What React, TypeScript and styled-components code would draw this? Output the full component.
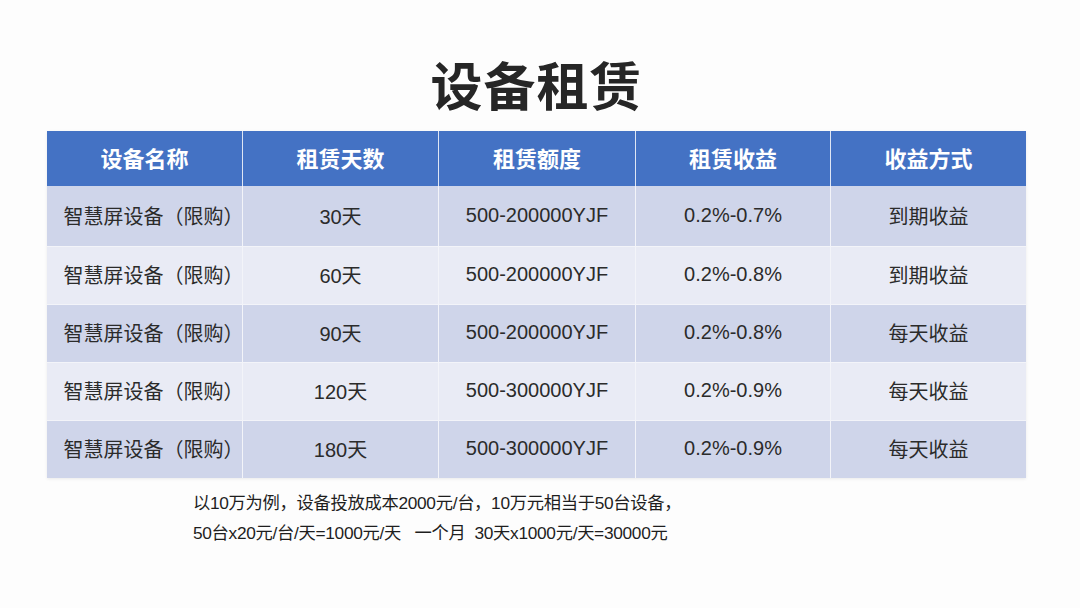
import React from "react";
import styled, { createGlobalStyle } from "styled-components";

const Global = createGlobalStyle`
  html, body { margin: 0; padding: 0; background: #ffffff; }
  body { font-family: "Liberation Sans", "Noto Sans CJK SC", sans-serif; }
`;

const Page = styled.div`
  width: 1080px;
  height: 608px;
  background: #fdfdfd;
  display: flex;
  flex-direction: column;
  padding: 0 0 0 47px;
  box-sizing: border-box;
  overflow: hidden;
`;

const Title = styled.h1`
  margin: 52px 0 0 0;
  width: 979px;
  height: 79px;
  text-align: center;
  font-family: "Noto Sans CJK SC", sans-serif;
  font-weight: 700;
  font-size: 52px;
  line-height: 64px;
  color: #262626;
  letter-spacing: 1px;
`;

const Table = styled.div`
  width: 979px;
  display: grid;
  grid-template-columns: 195px 196px 197px 195px 196px;
  box-shadow: 0 1px 3px rgba(0, 0, 0, 0.08);
`;

const HeadCell = styled.div<{ first?: boolean }>`
  height: 55px;
  background: #4472c4;
  color: #ffffff;
  font-family: "Noto Sans CJK SC", sans-serif;
  font-weight: 700;
  font-size: 22px;
  display: flex;
  align-items: center;
  justify-content: center;
  border-left: ${(p) => (p.first ? "none" : "1px solid #dfe6f4")};
  box-sizing: border-box;
  padding-bottom: 4px;
`;

const Cell = styled.div<{ alt: boolean; first?: boolean; tall?: boolean }>`
  height: ${(p) => (p.tall ? 60 : 58)}px;
  background: ${(p) => (p.alt ? "#e9ebf5" : "#cfd5ea")};
  color: #2b2b2b;
  font-size: 20px;
  display: flex;
  align-items: center;
  justify-content: center;
  border-left: ${(p) => (p.first ? "none" : "1.5px solid #f3f4f9")};
  border-top: ${(p) => (p.tall ? "none" : "1.5px solid #f3f4f9")};
  box-sizing: border-box;
  padding-bottom: 2px;
  padding-left: ${(p) => (p.first ? 18 : 0)}px;
  white-space: nowrap;
`;

const Note = styled.div`
  margin: 10px 0 0 146px;
  font-size: 17.3px;
  line-height: 30px;
  color: #1e1e1e;
  letter-spacing: -0.3px;
`;

const headers = ["设备名称", "租赁天数", "租赁额度", "租赁收益", "收益方式"];

const rows = [
  ["智慧屏设备（限购）", "30天", "500-200000YJF", "0.2%-0.7%", "到期收益"],
  ["智慧屏设备（限购）", "60天", "500-200000YJF", "0.2%-0.8%", "到期收益"],
  ["智慧屏设备（限购）", "90天", "500-200000YJF", "0.2%-0.8%", "每天收益"],
  ["智慧屏设备（限购）", "120天", "500-300000YJF", "0.2%-0.9%", "每天收益"],
  ["智慧屏设备（限购）", "180天", "500-300000YJF", "0.2%-0.9%", "每天收益"],
];

export default function App() {
  return (
    <Page>
      <Global />
      <Title>设备租赁</Title>
      <Table>
        {headers.map((h, i) => (
          <HeadCell key={h} first={i === 0}>
            {h}
          </HeadCell>
        ))}
        {rows.map((r, ri) =>
          r.map((c, ci) => (
            <Cell key={`${ri}-${ci}`} alt={ri % 2 === 1} first={ci === 0} tall={ri === 0}>
              {c}
            </Cell>
          ))
        )}
      </Table>
      <Note>
        以10万为例，设备投放成本2000元/台，10万元相当于50台设备，
        <br />
        50台x20元/台/天=1000元/天&nbsp;&nbsp;&nbsp;一个月&nbsp;&nbsp;30天x1000元/天=30000元
      </Note>
    </Page>
  );
}
